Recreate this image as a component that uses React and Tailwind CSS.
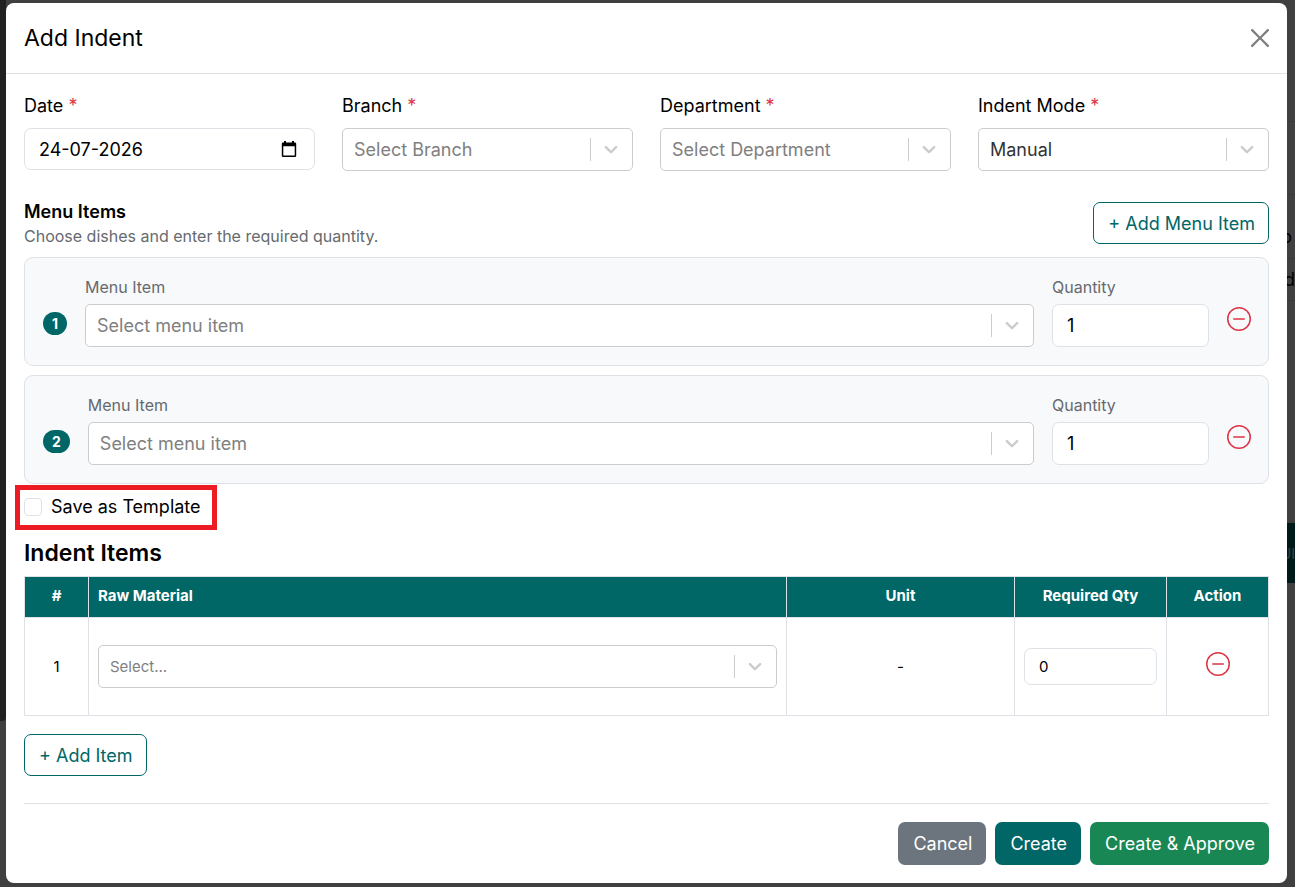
import React, { useState } from 'react'

function Chevron() {
  return (
    <svg className="mb-px h-[22px] w-[22px] fill-[#cccccc]" viewBox="0 0 20 20" aria-hidden="true">
      <path d="M4.516 7.548c0.436-0.446 1.043-0.481 1.576 0l3.908 3.747 3.908-3.747c0.533-0.481 1.141-0.446 1.574 0 0.436 0.445 0.408 1.197 0 1.615-0.406 0.418-4.695 4.502-4.695 4.502-0.217 0.223-0.502 0.335-0.787 0.335s-0.57-0.112-0.789-0.335c0 0-4.287-4.084-4.695-4.502s-0.436-1.17 0-1.615z" />
    </svg>
  )
}

function SelectBox({ id, label, placeholder, options = [], small = false, filled = false }) {
  return (
    <div className="relative">
      <select
        id={id}
        aria-label={label}
        className={`block h-[43px] w-full appearance-none rounded-[5px] border border-[#cccccc] bg-white pl-[11px] pr-12 ${small ? 'text-[15px]' : 'text-[18px]'} ${filled ? 'text-[#333333]' : 'text-[#808080]'}`}
      >
        {placeholder && <option value="">{placeholder}</option>}
        {options.map((o) => (
          <option key={o}>{o}</option>
        ))}
      </select>
      <div className="pointer-events-none absolute inset-y-0 right-0 flex items-center gap-[9px] pr-[11px]">
        <span className="h-[23px] w-px bg-[#cccccc]" />
        <Chevron />
      </div>
    </div>
  )
}

function Field({ id, label, children }) {
  return (
    <div>
      <label htmlFor={id} className="mb-[9px] block">
        {label} <span className="text-[#dc3545]">*</span>
      </label>
      {children}
    </div>
  )
}

function RemoveButton({ label, className = '' }) {
  return (
    <button type="button" aria-label={label} className={`block text-[#dc3545] ${className}`}>
      <svg className="h-6 w-6" viewBox="0 0 16 16" fill="currentColor" aria-hidden="true">
        <path d="M8 15A7 7 0 1 1 8 1a7 7 0 0 1 0 14m0 1A8 8 0 1 0 8 0a8 8 0 0 0 0 16" />
        <path d="M4 8a.5.5 0 0 1 .5-.5h7a.5.5 0 0 1 0 1h-7A.5.5 0 0 1 4 8" />
      </svg>
    </button>
  )
}

function MenuItemRow({ index }) {
  const [qty, setQty] = useState('1')
  return (
    <div className="flex items-end gap-[18px] rounded-[9px] border border-[#dee2e6] bg-[#f8f9fb] py-[18px] pr-[17px] pl-[18px]">
      <span className="mb-3 rounded-full bg-[#006666] px-[9px] text-[14px] leading-[23px] font-bold text-white">{index}</span>
      <div className="flex-1">
        <label htmlFor={`menu-${index}`} className="mb-[6px] block text-[16px] leading-[22px] text-[#666a6e]">
          Menu Item
        </label>
        <SelectBox id={`menu-${index}`} placeholder="Select menu item" />
      </div>
      <div className="w-[157px]">
        <label htmlFor={`qty-${index}`} className="mb-[6px] block text-[16px] leading-[22px] text-[#666a6e]">
          Quantity
        </label>
        <input
          id={`qty-${index}`}
          value={qty}
          onChange={(e) => setQty(e.target.value)}
          className="block h-[43px] w-full rounded-[7px] border border-[#dee2e6] bg-white px-[14px]"
        />
      </div>
      <RemoveButton label={`Remove menu item ${index}`} className="mb-4" />
    </div>
  )
}

function OutlineButton({ children }) {
  return (
    <button type="button" className="h-[42px] rounded-[7px] border border-[#006666] pr-[13px] pl-[14px] text-[#006666]">
      {children}
    </button>
  )
}

export default function App() {
  const [date, setDate] = useState('24-07-2026')
  const [qty, setQty] = useState('0')

  return (
    <div className="grid min-h-screen grid-cols-[6px_minmax(0,1fr)_8px] bg-[#404040] font-['Inter',sans-serif] text-[18px] leading-[27px] text-black">
      {/* Sidebar edge of the dimmed page */}
      <div className="h-[721px] rounded-br bg-[#212121]" />

      <main className="mt-[3px] mb-1 rounded-lg bg-white" role="dialog" aria-labelledby="title">
        <header className="flex items-center justify-between border-b border-[#dee2e6] p-[18px]">
          <h1 id="title" className="text-[23px] leading-[34px]">Add Indent</h1>
          <button type="button" aria-label="Close" className="text-[#7f7f7f]">
            <svg className="h-[18px] w-[18px]" viewBox="0 0 16 16" fill="currentColor" aria-hidden="true">
              <path d="M.293.293a1 1 0 0 1 1.414 0L8 6.586 14.293.293a1 1 0 1 1 1.414 1.414L9.414 8l6.293 6.293a1 1 0 0 1-1.414 1.414L8 9.414l-6.293 6.293a1 1 0 0 1-1.414-1.414L6.586 8 .293 1.707a1 1 0 0 1 0-1.414z" />
            </svg>
          </button>
        </header>

        <form className="p-[18px]" onSubmit={(e) => e.preventDefault()}>
          <div className="grid grid-cols-4 gap-[27px]">
            <Field id="date" label="Date">
              <div className="flex h-[42px] items-center rounded-[7px] border border-[#dee2e6] pr-[17px] pl-[14px]">
                <input id="date" value={date} onChange={(e) => setDate(e.target.value)} className="min-w-0 flex-1 outline-none" />
                <button type="button" aria-label="Open calendar">
                  <svg className="h-4 w-4" viewBox="0 0 16 16" aria-hidden="true">
                    <path d="M3 0h2v1.5h6V0h2v1.5h1a1.2 1.2 0 0 1 1.2 1.2v12a1.2 1.2 0 0 1-1.2 1.2H2a1.2 1.2 0 0 1-1.2-1.2v-12A1.2 1.2 0 0 1 2 1.5h1zM2.3 5.2v9.3h11.4V5.2z" fill="black" />
                  </svg>
                </button>
              </div>
            </Field>
            <Field id="branch" label="Branch">
              <SelectBox id="branch" placeholder="Select Branch" />
            </Field>
            <Field id="department" label="Department">
              <SelectBox id="department" placeholder="Select Department" />
            </Field>
            <Field id="mode" label="Indent Mode">
              <SelectBox id="mode" options={['Manual']} filled />
            </Field>
          </div>

          <div className="mt-[27px] mb-[9px] flex items-center justify-between">
            <div>
              <h2 className="font-semibold">Menu Items</h2>
              <p className="text-[16px] leading-[23px] text-[#666a6e]">Choose dishes and enter the required quantity.</p>
            </div>
            <OutlineButton>+ Add Menu Item</OutlineButton>
          </div>

          <div className="flex flex-col gap-[9px]">
            <MenuItemRow index={1} />
            <MenuItemRow index={2} />
          </div>

          <div className="relative mt-[9px] w-fit">
            <label className="flex items-center gap-[9px]">
              <input type="checkbox" className="h-[18px] w-[18px] appearance-none rounded border border-[#dee2e6] bg-white checked:bg-[#006666]" />
              Save as Template
            </label>
            {/* Highlight frame round the option */}
            <span className="pointer-events-none absolute -top-2 -right-4 -bottom-[10px] -left-[9px] border-[5px] border-[#ed1c24]" />
          </div>

          <h2 className="mt-5 mb-[9px] text-[23px] font-semibold">Indent Items</h2>
          <table className="w-full table-fixed border-collapse text-[15px] [&_td]:border [&_td]:border-[#dee2e6] [&_td]:px-[9px] [&_th]:border [&_th]:border-[#dee2e6] [&_th]:px-[9px] [&_th]:pb-1">
            <thead>
              <tr className="h-[41px] bg-[#006666] text-white">
                <th className="w-[64px]">#</th>
                <th className="text-left">Raw Material</th>
                <th className="w-[228px]">Unit</th>
                <th className="w-[152px]">Required Qty</th>
                <th className="w-[102px]">Action</th>
              </tr>
            </thead>
            <tbody>
              <tr className="h-[98px] text-center">
                <td>1</td>
                <td className="text-left">
                  <SelectBox label="Raw material" placeholder="Select..." small />
                </td>
                <td>-</td>
                <td>
                  <input
                    aria-label="Required quantity"
                    value={qty}
                    onChange={(e) => setQty(e.target.value)}
                    className="block h-[37px] w-full rounded-[7px] border border-[#dee2e6] px-[14px]"
                  />
                </td>
                <td>
                  <RemoveButton label="Remove item 1" className="mx-auto mb-[5px]" />
                </td>
              </tr>
            </tbody>
          </table>

          <div className="mt-[18px]">
            <OutlineButton>+ Add Item</OutlineButton>
          </div>

          <footer className="mt-[27px] flex justify-end gap-[9px] border-t border-[#dee2e6] pt-[18px] text-white">
            <button type="button" className="h-[43px] rounded-[7px] bg-[#6c757d] pr-[14px] pl-[15px]">Cancel</button>
            <button type="submit" className="h-[43px] rounded-[7px] bg-[#006666] pr-[14px] pl-[15px]">Create</button>
            <button type="button" className="h-[43px] rounded-[7px] bg-[#198754] pr-[14px] pl-[15px]">Create &amp; Approve</button>
          </footer>
        </form>
      </main>

      {/* Sliver of the dimmed page on the right */}
      <div className="overflow-hidden">
        <div className="h-[122px] border-b border-[#393939]" />
        <div className="h-[73px] border-b border-[#393939]" />
        <div className="flex h-[64px] items-end justify-end border-b border-[#393939] pr-[3px] pb-2">o</div>
        <div className="flex h-[42px] items-center justify-end border-b border-[#393939]">d</div>
        <div className="h-[222px]" />
        <div className="flex h-[60px] items-center justify-end bg-[#001a1a] text-[14px] text-[#404040]">UI</div>
      </div>
    </div>
  )
}
